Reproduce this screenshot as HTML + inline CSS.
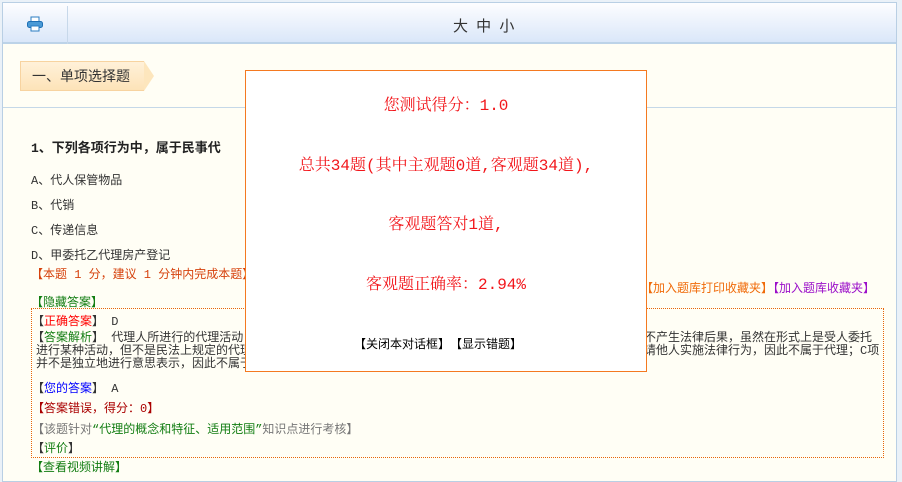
<!DOCTYPE html>
<html><head><meta charset="utf-8"><style>
*{margin:0;padding:0;box-sizing:border-box}
body{width:902px;height:475px;overflow:hidden;background:#eaf1f8;font-family:"Liberation Mono","Noto Sans CJK SC",monospace;font-size:12px;color:#333;position:relative}
.frame{position:absolute;left:2px;top:2px;width:895px;height:480px;border:1px solid #b9cfe4;background:#fffef5}
.hdr{position:absolute;left:0;top:0;width:100%;height:41px;background:linear-gradient(#fdfdff,#dae7f9);border-bottom:2px solid #bcd3e8}
.sep{position:absolute;left:64px;top:3px;width:1px;height:38px;background:#c7d8ea}
.a{position:absolute;white-space:nowrap}
.tag{position:absolute;left:17px;top:58px;width:124px;height:30px;background:linear-gradient(#fff1d9,#fde3b8);border:1px solid #f7d3a0;border-right:none;font-size:14px;line-height:28px;padding-left:11px;color:#333;font-family:"Liberation Sans","Noto Sans CJK SC",sans-serif}
.tag:after{content:"";position:absolute;right:-10px;top:-1px;border-left:10px solid #fde6bd;border-top:15px solid transparent;border-bottom:15px solid transparent}
.hl{position:absolute;left:0;top:104px;width:100%;height:1px;background:#c5d8e8}
.box{position:absolute;left:28px;top:305px;width:853px;height:150px;border:1px dotted #e8650a}
.pop{position:absolute;left:245px;top:70px;width:402px;height:302px;background:#fff;border:1px solid #f47920}
.pop .r{position:absolute;width:100%;text-align:center;color:#f2151a;font-size:16px;font-family:"Liberation Mono","Noto Serif CJK SC",serif}
.g{color:#127d12}
</style></head><body>
<div class="frame">
<div class="hdr"><div class="sep"></div>
<svg class="a" style="left:23px;top:12px" width="18" height="18" viewBox="0 0 18 18"><rect x="5" y="2" width="8" height="5" fill="#fff" stroke="#2a7cc2"/><rect x="1.5" y="6.5" width="15" height="6" rx="2" fill="#4a9ad6" stroke="#1e6fb4"/><rect x="5" y="11" width="8" height="5" fill="#fff" stroke="#2a7cc2"/></svg>
<div class="a" style="left:450px;top:12px;font-size:15px;color:#333;letter-spacing:2px;font-family:'Liberation Sans','Noto Sans CJK SC',sans-serif">大 中 小</div>
</div>
<div class="tag">一、单项选择题</div>
<div class="hl"></div>
<div class="a" style="left:28px;top:134px;font-size:13px;font-weight:bold;color:#222">1、下列各项行为中，属于民事代</div>
<div class="a" style="left:28px;top:168px">A、代人保管物品</div>
<div class="a" style="left:28px;top:193px">B、代销</div>
<div class="a" style="left:28px;top:218px">C、传递信息</div>
<div class="a" style="left:28px;top:243px">D、甲委托乙代理房产登记</div>
<div class="a" style="left:28px;top:262px;color:#d6420d">【本题 1 分，建议 1 分钟内完成本题】</div>
<div class="a" style="left:638px;top:276px;color:#f06b0a">【加入题库打印收藏夹】<span style="color:#9b0fc9">【加入题库收藏夹】</span></div>
<div class="a g" style="left:28px;top:290px">【隐藏答案】</div>
<div class="box"></div>
<div class="a" style="left:29px;top:309px">【<span style="color:#f00">正确答案</span>】 D</div>
<div class="a" style="left:29px;top:329px;line-height:13px">【<span class="g">答案解析</span>】 代理人所进行的代理活动</div>
<div class="a" style="left:33px;top:342px;line-height:13px">进行某种活动，但不是民法上规定的代理</div>
<div class="a" style="left:33px;top:355px;line-height:13px">并不是独立地进行意思表示，因此不属于代理</div>
<div class="a" style="left:641px;top:329px;line-height:13px">不产生法律后果，虽然在形式上是受人委托</div>
<div class="a" style="left:641px;top:342px;line-height:13px">请他人实施法律行为，因此不属于代理；C项</div>
<div class="a" style="left:29px;top:376px">【<span style="color:#00f">您的答案</span>】 A</div>
<div class="a" style="left:29px;top:396px;color:#a00">【答案错误，得分：0】</div>
<div class="a" style="left:29px;top:417px;color:#777">【该题针对<span class="g">“代理的概念和特征、适用范围”</span>知识点进行考核】</div>
<div class="a" style="left:29px;top:436px">【<span class="g">评价</span>】</div>
<div class="a g" style="left:28px;top:455px">【查看视频讲解】</div>
</div>
<div class="pop">
<div class="r" style="top:21px">您测试得分：1.0</div>
<div class="r" style="top:81px">总共34题(其中主观题0道,客观题34道),</div>
<div class="r" style="top:140px">客观题答对1道,</div>
<div class="r" style="top:200px">客观题正确率：2.94%</div>
<div class="a" style="left:108px;top:264px;font-size:12px;color:#000">【关闭本对话框】　【显示错题】</div>
</div>
</body></html>
